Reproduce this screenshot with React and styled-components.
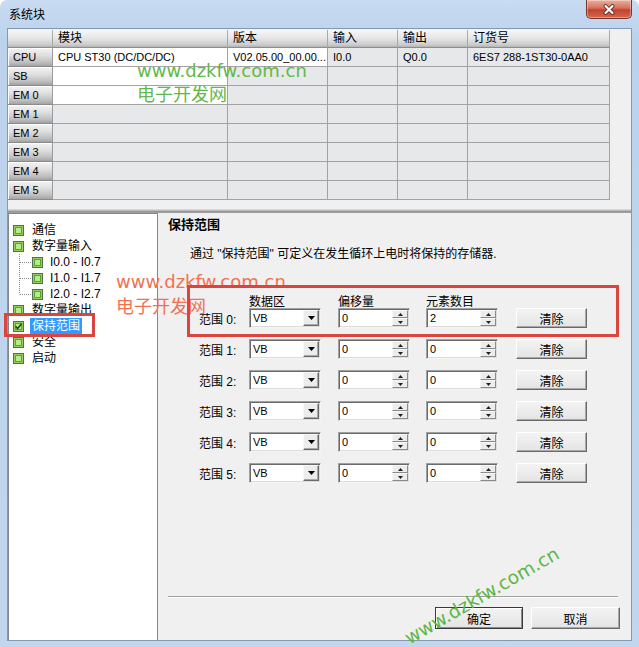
import React from 'react';
import styled, { createGlobalStyle } from 'styled-components';

const GlobalStyle = createGlobalStyle`
  html, body {
    margin: 0;
    padding: 0;
    background: #fff;
  }
  body {
    font-family: "Liberation Sans", "Noto Sans CJK SC", sans-serif;
    font-size: 12px;
    color: #000;
  }
`;

const CJK = `"Liberation Sans", "Noto Sans CJK SC", sans-serif`;

// 窗口外框
const Window = styled.div`
  position: relative;
  width: 639px;
  height: 647px;
  display: flex;
  flex-direction: column;
  background: linear-gradient(180deg, #c8dbf1 0%, #bcd2ec 40px, #c2d6ee 100%);
  border-radius: 7px 7px 0 0;
  overflow: hidden;
`;

const TitleBar = styled.div`
  flex: none;
  height: 28px;
  display: flex;
  justify-content: space-between;
  align-items: flex-start;
  padding: 0 7px 0 9px;
`;

const Title = styled.div`
  margin-top: 7px;
  line-height: 16px;
  font-family: ${CJK};
  font-size: 12px;
`;

const CloseButton = styled.div`
  width: 46px;
  height: 19px;
  box-sizing: border-box;
  border: 1px solid #7a3328;
  border-top: none;
  border-radius: 0 0 5px 5px;
  background: linear-gradient(#eab0a2, #d8705a 45%, #c2422e 55%, #d4684c);
  box-shadow: inset 0 0 0 1px rgba(255, 255, 255, 0.35);
  display: flex;
  align-items: center;
  justify-content: center;
`;

const Client = styled.div`
  flex: 1;
  min-height: 0;
  margin: 0 7px 6px;
  border: 1px solid #8398b2;
  background: #f0f0f0;
  display: flex;
  flex-direction: column;
`;

// 上部模块表
const TablePane = styled.div`
  flex: none;
  height: 179px;
  padding-top: 1px;
`;

const Grid = styled.div`
  display: grid;
  grid-template-columns: 45px 175px 100px 70px 70px 142px;
  grid-template-rows: 18px repeat(8, 19px);
  width: 602px;
`;

const HeadCell = styled.div`
  box-sizing: border-box;
  border-right: 1px solid #a8a8a8;
  border-bottom: 1px solid #8c8c8c;
  background: linear-gradient(#f7f7f7, #e7e7e7 45%, #cdcdcd 85%, #b4b4b4);
  padding-left: 5px;
  line-height: 17px;
  font-family: ${CJK};
  font-size: 12px;
`;

const RowHead = styled.div`
  box-sizing: border-box;
  border-right: 1px solid #9a9a9a;
  border-bottom: 1px solid #8a8a8a;
  background: linear-gradient(#f4f4f4, #dfdfdf 40%, #bebebe 80%, #a3a3a3);
  box-shadow: inset 1px 1px 0 #fff;
  padding-left: 5px;
  line-height: 18px;
  font-size: 11px;
`;

const Cell = styled.div`
  box-sizing: border-box;
  border-right: 1px solid #a3a3a3;
  border-bottom: 1px solid #a3a3a3;
  background: ${(p) => (p.$white ? '#fff' : '#e7e8e9')};
  padding-left: 5px;
  line-height: 18px;
  font-size: 11px;
  white-space: nowrap;
  overflow: hidden;
`;

const Splitter = styled.div`
  flex: none;
  height: 4px;
  background: linear-gradient(#e4e4e4, #c4c4c4 30%, #8e8e8e 70%, #a8a8a8);
`;

const Lower = styled.div`
  flex: 1;
  min-height: 0;
  display: flex;
`;

// 左侧树
const Tree = styled.div`
  flex: none;
  width: 150px;
  box-sizing: border-box;
  border: 1px solid #828790;
  border-bottom: none;
  background: #fff;
  padding-top: 8px;
`;

const TreeRow = styled.div`
  height: 16px;
  display: flex;
  align-items: center;
  padding-left: 4px;
`;

const NodeText = styled.span`
  margin-left: ${(p) => (p.$child ? 7 : 8)}px;
  padding: 0 2px;
  margin-right: -2px;
  position: relative;
  left: -2px;
  line-height: 16px;
  font-family: ${CJK};
  font-size: 12px;
  white-space: nowrap;
  background: ${(p) => (p.$selected ? '#3399ff' : 'transparent')};
  color: ${(p) => (p.$selected ? '#fff' : '#000')};
`;

// 右侧面板
const Panel = styled.div`
  flex: 1;
  min-width: 0;
  display: flex;
  flex-direction: column;
  padding: 0 11px 11px 10px;
`;

const Heading = styled.div`
  margin-top: 4px;
  line-height: 16px;
  font-family: ${CJK};
  font-size: 13px;
  font-weight: bold;
`;

const Description = styled.div`
  margin: 13px 0 0 22px;
  line-height: 16px;
  font-family: ${CJK};
  font-size: 12px;
`;

const Form = styled.div`
  margin: 35px 0 0 31px;
  display: flex;
  flex-direction: column;
`;

const FormGrid = styled.div`
  display: grid;
  grid-template-columns: 50px 89px 88px 90px 71px;
  align-items: center;
`;

const FormHead = styled(FormGrid)`
  height: 11px;
  line-height: 11px;
  font-family: ${CJK};
  font-size: 12px;
`;

const Rows = styled.div`
  display: flex;
  flex-direction: column;
  gap: 11px;
`;

const FormRow = styled(FormGrid)`
  height: 20px;
`;

const RowLabel = styled.span`
  font-family: ${CJK};
  font-size: 12px;
  white-space: nowrap;
`;

const Field = styled.div`
  width: 72px;
  height: 20px;
  box-sizing: border-box;
  display: flex;
  background: #fff;
  border: 1px solid;
  border-color: #a0a0a0 #f4f4f4 #f4f4f4 #a0a0a0;
  box-shadow: inset 1px 1px 0 #6a6a6a, inset -1px -1px 0 #dcdcdc;
  padding: 1px;
`;

const FieldValue = styled.span`
  flex: 1;
  padding-left: 2px;
  line-height: 16px;
  font-size: 11px;
`;

const DropButton = styled.div`
  width: 16px;
  height: 16px;
  box-sizing: border-box;
  background: #ececec;
  border: 1px solid;
  border-color: #f8f8f8 #6a6a6a #6a6a6a #f8f8f8;
  box-shadow: inset -1px -1px 0 #a8a8a8;
  display: flex;
  align-items: center;
  justify-content: center;
`;

const SpinColumn = styled.div`
  width: 16px;
  height: 16px;
  display: flex;
  flex-direction: column;
`;

const SpinHalf = styled.div`
  flex: 1;
  box-sizing: border-box;
  background: #ececec;
  border: 1px solid;
  border-color: #f8f8f8 #8a8a8a #8a8a8a #f8f8f8;
  display: flex;
  align-items: center;
  justify-content: center;
`;

const PushButton = styled.button`
  width: ${(p) => p.$w}px;
  height: ${(p) => p.$h}px;
  box-sizing: border-box;
  padding: 0;
  font-family: ${CJK};
  font-size: 12px;
  color: #000;
  background: linear-gradient(#f3f3f3, #e4e4e4);
  border: 1px solid;
  border-color: ${(p) => (p.$default ? '#3a3a3a' : '#fff #6a6a6a #6a6a6a #fff')};
  box-shadow: ${(p) =>
    p.$default
      ? 'inset 1px 1px 0 #fff, inset -1px -1px 0 #8a8a8a'
      : 'inset -1px -1px 0 #a8a8a8'};
`;

const Spacer = styled.div`
  flex: 1;
`;

const Divider = styled.div`
  height: 0;
  margin: 0 2px 9px 0;
  border-top: 1px solid #a0a0a0;
  border-bottom: 1px solid #fff;
`;

const ButtonBar = styled.div`
  display: flex;
  justify-content: flex-end;
  gap: 8px;
`;

// 覆盖层: 标注框与水印
const Annotation = styled.div`
  position: absolute;
  left: ${(p) => p.$x}px;
  top: ${(p) => p.$y}px;
  width: ${(p) => p.$w}px;
  height: ${(p) => p.$h}px;
  box-sizing: border-box;
  border: 3px solid #db4540;
  pointer-events: none;
`;

const Watermark = styled.div`
  position: absolute;
  left: ${(p) => p.$x}px;
  top: ${(p) => p.$y}px;
  color: ${(p) => p.$color};
  font-family: ${(p) => (p.$cjk ? '"Noto Sans CJK SC", sans-serif' : '"DejaVu Sans", sans-serif')};
  font-size: 18px;
  line-height: 18px;
  white-space: nowrap;
  pointer-events: none;
`;

const DiagonalMark = styled.div`
  position: absolute;
  left: 482px;
  top: 596px;
  width: 0;
  height: 0;
  pointer-events: none;
`;

const DiagonalText = styled.div`
  transform: translate(-50%, -50%) rotate(-30deg);
  color: #5cb646;
  font-family: "DejaVu Sans", sans-serif;
  font-size: 18.5px;
  line-height: 18px;
  white-space: nowrap;
  width: max-content;
`;

const columns = ['模块', '版本', '输入', '输出', '订货号'];

const tableRows = [
  { head: 'CPU', cells: ['CPU ST30 (DC/DC/DC)', 'V02.05.00_00.00...', 'I0.0', 'Q0.0', '6ES7 288-1ST30-0AA0'], white: [0, 1] },
  { head: 'SB', cells: ['', '', '', '', ''], white: [0] },
  { head: 'EM 0', cells: ['', '', '', '', ''], white: [0] },
  { head: 'EM 1', cells: ['', '', '', '', ''], white: [] },
  { head: 'EM 2', cells: ['', '', '', '', ''], white: [] },
  { head: 'EM 3', cells: ['', '', '', '', ''], white: [] },
  { head: 'EM 4', cells: ['', '', '', '', ''], white: [] },
  { head: 'EM 5', cells: ['', '', '', '', ''], white: [] },
];

const treeItems = [
  { label: '通信' },
  { label: '数字量输入' },
  { label: 'I0.0 - I0.7', child: true },
  { label: 'I1.0 - I1.7', child: true },
  { label: 'I2.0 - I2.7', child: true, last: true },
  { label: '数字量输出' },
  { label: '保持范围', selected: true },
  { label: '安全' },
  { label: '启动' },
];

const ranges = [
  { elements: '2' },
  { elements: '0' },
  { elements: '0' },
  { elements: '0' },
  { elements: '0' },
  { elements: '0' },
];

function CloseGlyph() {
  return (
    <svg width="14" height="11" viewBox="0 0 14 11">
      <path d="M3.5 2 L10.5 9 M10.5 2 L3.5 9" stroke="#5a1f16" strokeWidth="3.8" strokeLinecap="round" />
      <path d="M3.5 2 L10.5 9 M10.5 2 L3.5 9" stroke="#fff" strokeWidth="2.2" strokeLinecap="round" />
    </svg>
  );
}

function NodeIcon({ checked }) {
  return (
    <svg width="11" height="11" viewBox="0 0 11 11" style={{ flex: 'none' }}>
      <rect x="0.5" y="0.5" width="10" height="10" fill="#90d060" stroke="#55704a" />
      <rect x="2.5" y="2.5" width="6" height="6" fill="#b8ea86" stroke="#5aa535" />
      {checked && (
        <path d="M2.5 5.2 L4.6 7.6 L8.6 2.8" stroke="#1d4a12" strokeWidth="1.6" fill="none" />
      )}
    </svg>
  );
}

function Connector({ last }) {
  return (
    <svg width="19" height="16" viewBox="0 0 19 16" style={{ flex: 'none' }}>
      <line x1="6.5" y1="0" x2="6.5" y2={last ? 8.5 : 16} stroke="#8a8a8a" strokeDasharray="1 1" />
      <line x1="7" y1="8.5" x2="18" y2="8.5" stroke="#8a8a8a" strokeDasharray="1 1" />
    </svg>
  );
}

function DownArrow() {
  return (
    <svg width="7" height="4" viewBox="0 0 7 4">
      <path d="M0 0 H7 L3.5 4 Z" fill="#000" />
    </svg>
  );
}

function SpinArrow({ up }) {
  return (
    <svg width="5" height="3" viewBox="0 0 5 3">
      <path d={up ? 'M2.5 0 L5 3 H0 Z' : 'M0 0 H5 L2.5 3 Z'} fill="#202020" />
    </svg>
  );
}

function Select({ value }) {
  return (
    <Field>
      <FieldValue>{value}</FieldValue>
      <DropButton>
        <DownArrow />
      </DropButton>
    </Field>
  );
}

function Spin({ value }) {
  return (
    <Field>
      <FieldValue>{value}</FieldValue>
      <SpinColumn>
        <SpinHalf>
          <SpinArrow up />
        </SpinHalf>
        <SpinHalf>
          <SpinArrow />
        </SpinHalf>
      </SpinColumn>
    </Field>
  );
}

export default function App() {
  return (
    <>
      <GlobalStyle />
      <Window>
        <TitleBar>
          <Title>系统块</Title>
          <CloseButton>
            <CloseGlyph />
          </CloseButton>
        </TitleBar>
        <Client>
          <TablePane>
            <Grid>
              <HeadCell />
              {columns.map((c) => (
                <HeadCell key={c}>{c}</HeadCell>
              ))}
              {tableRows.map((row) => (
                <React.Fragment key={row.head}>
                  <RowHead>{row.head}</RowHead>
                  {row.cells.map((text, i) => (
                    <Cell key={i} $white={row.white.includes(i)}>
                      {text}
                    </Cell>
                  ))}
                </React.Fragment>
              ))}
            </Grid>
          </TablePane>
          <Splitter />
          <Lower>
            <Tree>
              {treeItems.map((item) => (
                <TreeRow key={item.label}>
                  {item.child && <Connector last={item.last} />}
                  <NodeIcon checked={item.selected} />
                  <NodeText $child={item.child} $selected={item.selected}>
                    {item.label}
                  </NodeText>
                </TreeRow>
              ))}
            </Tree>
            <Panel>
              <Heading>保持范围</Heading>
              <Description>通过 "保持范围" 可定义在发生循环上电时将保持的存储器.</Description>
              <Form>
                <FormHead>
                  <span />
                  <span>数据区</span>
                  <span>偏移量</span>
                  <span>元素数目</span>
                  <span />
                </FormHead>
                <Rows>
                  {ranges.map((r, i) => (
                    <FormRow key={i}>
                      <RowLabel>范围 {i}:</RowLabel>
                      <Select value="VB" />
                      <Spin value="0" />
                      <Spin value={r.elements} />
                      <PushButton $w={71} $h={20}>清除</PushButton>
                    </FormRow>
                  ))}
                </Rows>
              </Form>
              <Spacer />
              <Divider />
              <ButtonBar>
                <PushButton $w={88} $h={22} $default>确定</PushButton>
                <PushButton $w={89} $h={22}>取消</PushButton>
              </ButtonBar>
            </Panel>
          </Lower>
        </Client>

        <Watermark $x={137} $y={62} $color="#62b84a">www.dzkfw.com.cn</Watermark>
        <Watermark $x={137} $y={84} $color="#62b84a" $cjk>电子开发网</Watermark>
        <Watermark $x={116} $y={273} $color="#f07252">www.dzkfw.com.cn</Watermark>
        <Watermark $x={116} $y={296} $color="#f07252" $cjk>电子开发网</Watermark>
        <DiagonalMark>
          <DiagonalText>www.dzkfw.com.cn</DiagonalText>
        </DiagonalMark>

        <Annotation $x={4} $y={313} $w={91} $h={24} />
        <Annotation $x={187} $y={285} $w={432} $h={52} />
      </Window>
    </>
  );
}
